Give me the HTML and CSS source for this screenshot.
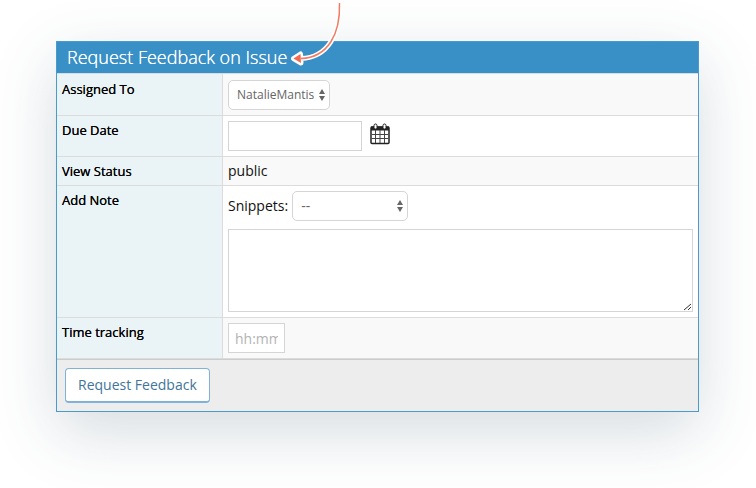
FILE: index.html
```
<!DOCTYPE html>
<html lang="en">
<head>
<meta charset="utf-8">
<title>Request Feedback on Issue</title>
<link rel="stylesheet" href="styles.css">
</head>
<body>
<form class="card">
  <h1 class="card-title">Request Feedback on Issue
    <svg class="pointer" width="52" height="68" viewBox="0 0 52 68" aria-hidden="true">
      <path d="M48.500 3C49.500 34 37 57.500 10 58.500M2.500 58.500L9.500 54L10 63Z" fill="none" stroke="#fff" stroke-width="5" stroke-linejoin="round"/>
      <path d="M48.500 3C49.500 34 37 57.500 10 58.500" fill="none" stroke="#f47a63" stroke-width="1.500"/>
      <path d="M2.500 58.500L9.500 54L10 63Z" fill="#f4694f"/>
    </svg>
  </h1>
  <table class="fields">
    <tr class="shaded">
      <th scope="row"><label for="assignee">Assigned To</label></th>
      <td>
        <span class="select select-assignee">
          <select id="assignee"><option>NatalieMantis</option></select>
          <svg class="arrows" width="6" height="12" viewBox="0 0 6 12" aria-hidden="true"><path d="M0 5L3 0L6 5ZM0 7L3 12L6 7Z"/></svg>
        </span>
      </td>
    </tr>
    <tr>
      <th scope="row"><label for="due">Due Date</label></th>
      <td>
        <div class="line">
          <input class="due" id="due" type="text">
          <svg class="calendar" width="20" height="22" viewBox="0 0 20 22" aria-hidden="true">
            <rect x="1" y="4" width="18" height="16.500" rx="1" fill="#fff" stroke="#222" stroke-width="1.500"/>
            <path d="M1 3.500H19V7.500H1Z" fill="#222"/>
            <path d="M5.500 7V20M10 7V20M14.500 7V20M2 11.500H18M2 15.500H18" stroke="#444" fill="none"/>
            <rect x="4" y="1" width="3" height="5" rx="1.500" fill="#fff" stroke="#222"/>
            <rect x="13" y="1" width="3" height="5" rx="1.500" fill="#fff" stroke="#222"/>
          </svg>
        </div>
      </td>
    </tr>
    <tr class="shaded">
      <th scope="row">View Status</th>
      <td>public</td>
    </tr>
    <tr>
      <th scope="row"><label for="note">Add Note</label></th>
      <td>
        <div class="line snippets">
          <label for="snippet">Snippets:</label>
          <span class="select select-snippet">
            <select id="snippet"><option>--</option></select>
            <svg class="arrows" width="6" height="12" viewBox="0 0 6 12" aria-hidden="true"><path d="M0 5L3 0L6 5ZM0 7L3 12L6 7Z"/></svg>
          </span>
        </div>
        <div class="note-box">
          <textarea id="note"></textarea>
          <svg class="grip" width="8" height="8" viewBox="0 0 8 8" aria-hidden="true"><path d="M0 7L7 1M4 7L7 4" stroke="#333" fill="none"/></svg>
        </div>
      </td>
    </tr>
    <tr class="shaded">
      <th scope="row"><label for="time">Time tracking</label></th>
      <td><input class="time" id="time" type="text" placeholder="hh:mm"></td>
    </tr>
  </table>
  <div class="card-footer"><button type="button">Request Feedback</button></div>
</form>
</body>
</html>
```
FILE: styles.css
```
* {
  box-sizing: border-box;
}

body {
  margin: 0;
  padding: 41px 57px 76px 56px;
  background: #fff;
  color: #111;
  font: 14px/18px "Open Sans", sans-serif;
}

.card {
  border: 1px solid #4a9acb;
  background: #fff;
  box-shadow: 0 20px 60px rgba(50, 80, 100, 0.2);
}

.card-title {
  position: relative;
  margin: 0;
  padding: 0 10px;
  border-bottom: 1px solid #d9dcdd;
  background: #3890c7;
  color: #fff;
  font-size: 18px;
  font-weight: 300;
  line-height: 31px;
  text-shadow: 0 0 0 #fff;
}

.pointer {
  position: absolute;
  left: 234px;
  bottom: 5px;
}

.fields {
  width: 100%;
  border-collapse: separate;
  border-spacing: 0;
}

.fields th,
.fields td {
  padding: 5px;
  border-bottom: 1px solid #dcdcdc;
  text-align: left;
  vertical-align: top;
}

.fields th {
  width: 166px;
  border-right: 1px solid #dcdcdc;
  background: #eaf3f5;
  color: #000;
  font-size: 13px;
  font-weight: 500;
  text-shadow: 0 0 0 #000;
}

.fields tr:first-child > * {
  padding-top: 6px;
}

.shaded td {
  background: #f9f9f9;
}

.line {
  display: flex;
  align-items: center;
}

.snippets {
  gap: 4px;
  margin-bottom: 8px;
}

.select {
  position: relative;
  display: block;
}

.select-assignee {
  width: 102px;
}

.select-snippet {
  width: 116px;
}

select,
input,
textarea {
  display: block;
  height: 30px;
  margin: 0;
  border: 1px solid #d5d5d5;
  background: #fff;
  color: #666;
  font: inherit;
}

select {
  width: 100%;
  padding: 0 8px;
  border-radius: 5px;
  appearance: none;
  font-size: 12px;
}

.select-snippet select {
  font-size: 14px;
}

.arrows {
  position: absolute;
  top: 9px;
  right: 5px;
  fill: #666;
}

.due {
  width: 134px;
}

.calendar {
  align-self: flex-start;
  margin: 2px 0 0 8px;
}

.note-box {
  position: relative;
}

textarea {
  width: 100%;
  height: 83px;
  resize: none;
}

.grip {
  position: absolute;
  right: 1px;
  bottom: 1px;
}

.time {
  width: 57px;
  padding: 0 6px;
}

.time::placeholder {
  color: #b3b3b3;
}

.card-footer {
  padding: 8px;
  border-top: 1px solid #ccc;
  background: #ededed;
}

button {
  display: block;
  height: 35px;
  padding: 0 12px;
  border: 1px solid #7fb2d6;
  border-bottom-width: 2px;
  border-radius: 4px;
  background: #fff;
  color: #41759b;
  font: inherit;
}
```
